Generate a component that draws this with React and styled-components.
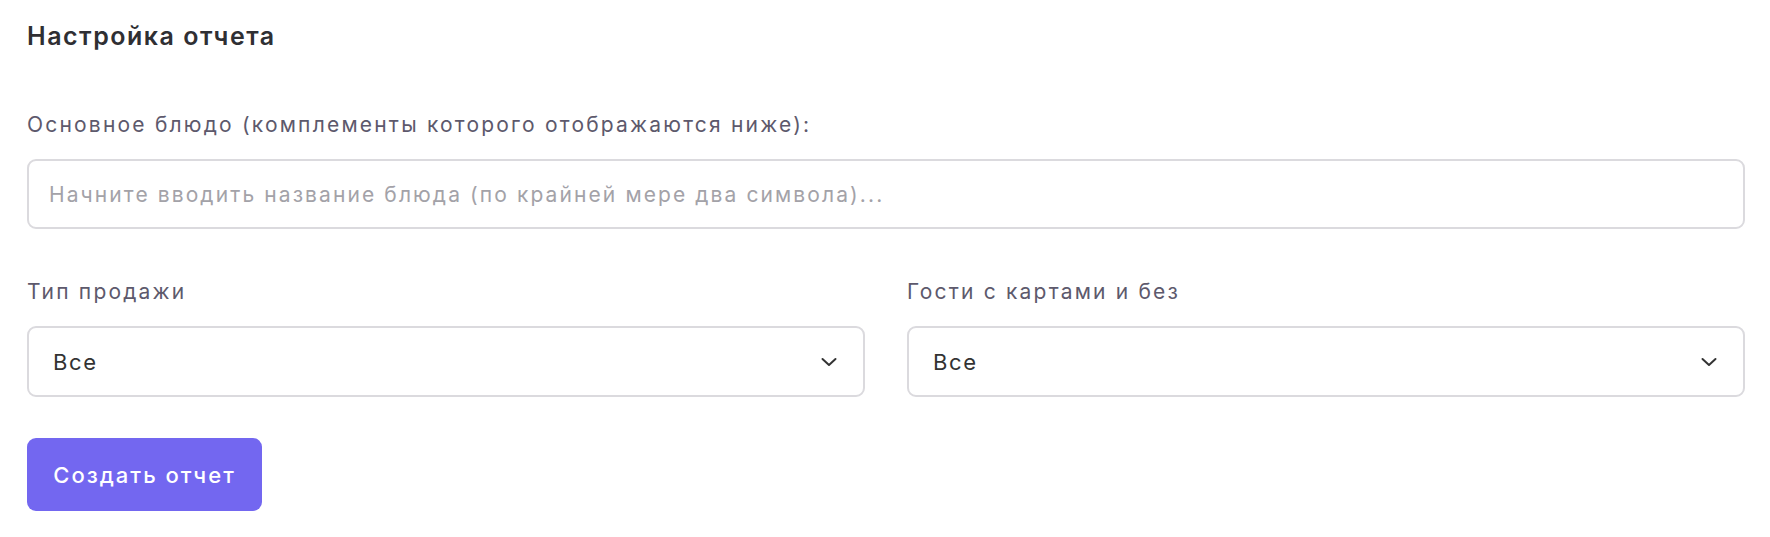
import React from 'react';
import styled, { createGlobalStyle } from 'styled-components';

const GlobalStyle = createGlobalStyle`
  body {
    margin: 0;
    background: #ffffff;
    font-family: Inter, "Noto Sans", sans-serif;
  }
`;

const Page = styled.div`
  display: flex;
  flex-direction: column;
  padding: 18px 25px 0 27px;
`;

const Title = styled.h2`
  margin: 0;
  font-size: 25px;
  line-height: 36px;
  font-weight: 600;
  letter-spacing: 1.5px;
  color: #2f2f33;
`;

const Label = styled.label`
  display: block;
  font-size: 21px;
  line-height: 28px;
  font-weight: 400;
  letter-spacing: 2.2px;
  color: #5d596c;
  margin-bottom: 20px;
`;

const Field = styled.div`
  display: flex;
  flex-direction: column;
  margin-top: ${(p) => p.$top || 0}px;
`;

const TextInput = styled.input`
  box-sizing: border-box;
  width: 100%;
  height: 70px;
  padding: 0 20px;
  border: 2px solid #dbdade;
  border-radius: 9px;
  font-family: inherit;
  font-size: 21px;
  letter-spacing: 2.1px;
  color: #333;
  outline: none;
  &::placeholder {
    color: #a3a2a8;
  }
`;

const Row = styled.div`
  display: grid;
  grid-template-columns: 1fr 1fr;
  column-gap: 42px;
  margin-top: 49px;
`;

const SelectBox = styled.div`
  box-sizing: border-box;
  height: 71px;
  display: flex;
  align-items: center;
  justify-content: space-between;
  padding: 0 26px 0 24px;
  border: 2px solid #dbdade;
  border-radius: 9px;
  font-size: 22px;
  letter-spacing: 1.7px;
  color: #333333;
  cursor: pointer;
`;

const Button = styled.button`
  align-self: flex-start;
  margin-top: 41px;
  width: 235px;
  height: 73px;
  border: none;
  border-radius: 9px;
  background: #7367f0;
  color: #ffffff;
  font-family: inherit;
  font-size: 22px;
  font-weight: 500;
  letter-spacing: 2px;
  cursor: pointer;
`;

const Chevron = () => (
  <svg width="16" height="10" viewBox="0 0 16 10" fill="none">
    <path d="M1.5 2l6.5 6 6.5-6" stroke="#333" strokeWidth="2" strokeLinecap="round" strokeLinejoin="round" />
  </svg>
);

const Select = ({ value }) => (
  <SelectBox>
    <span>{value}</span>
    <Chevron />
  </SelectBox>
);

const App = () => (
  <>
    <GlobalStyle />
    <Page>
      <Title>Настройка отчета</Title>
      <Field $top={57}>
        <Label>Основное блюдо (комплементы которого отображаются ниже):</Label>
        <TextInput placeholder="Начните вводить название блюда (по крайней мере два символа)..." />
      </Field>
      <Row>
        <Field>
          <Label>Тип продажи</Label>
          <Select value="Все" />
        </Field>
        <Field>
          <Label>Гости с картами и без</Label>
          <Select value="Все" />
        </Field>
      </Row>
      <Button>Создать отчет</Button>
    </Page>
  </>
);

export default App;
